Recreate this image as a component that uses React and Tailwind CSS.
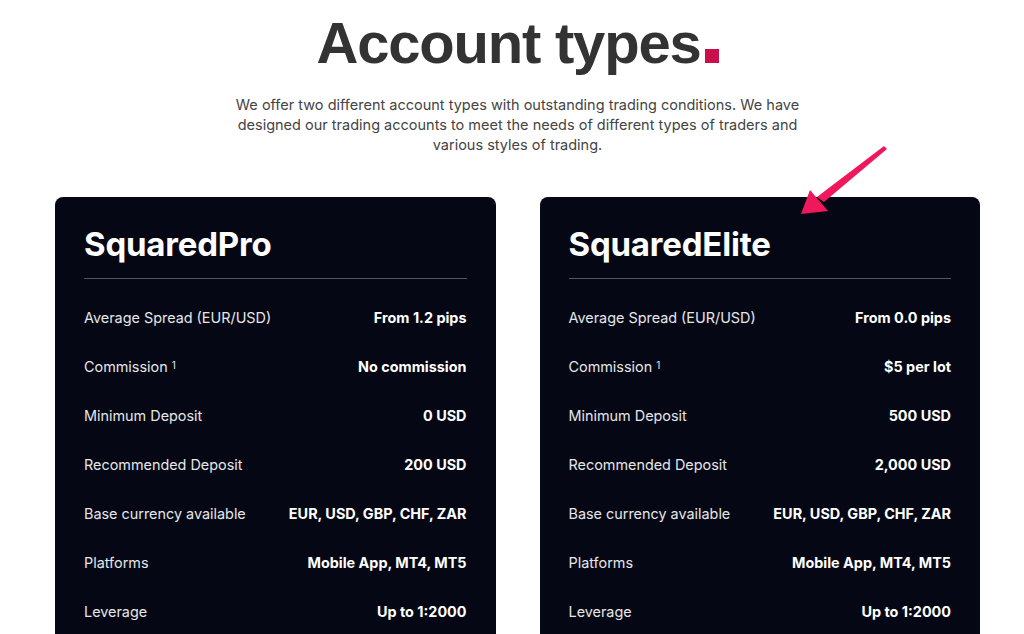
import React from "react";

const accounts = [
    {
        name: "SquaredPro",
        rows: [
            ["Average Spread (EUR/USD)", "From 1.2 pips"],
            ["Commission", "No commission", true],
            ["Minimum Deposit", "0 USD"],
            ["Recommended Deposit", "200 USD"],
            ["Base currency available", "EUR, USD, GBP, CHF, ZAR"],
            ["Platforms", "Mobile App, MT4, MT5"],
            ["Leverage", "Up to 1:2000"],
        ],
    },
    {
        name: "SquaredElite",
        rows: [
            ["Average Spread (EUR/USD)", "From 0.0 pips"],
            ["Commission", "$5 per lot", true],
            ["Minimum Deposit", "500 USD"],
            ["Recommended Deposit", "2,000 USD"],
            ["Base currency available", "EUR, USD, GBP, CHF, ZAR"],
            ["Platforms", "Mobile App, MT4, MT5"],
            ["Leverage", "Up to 1:2000"],
        ],
    },
];

const AccountCard = ({ account }) => {
    return (
        <div className="bg-[#050814] rounded-lg px-[29px] pt-[26px] pb-8 h-[480px]">
            <h2 className="text-[33px] font-bold text-white leading-[42px] tracking-[-0.2px]">{account.name}</h2>
            <div className="h-px bg-[#54565f] mt-[13px] mb-[14px]"></div>
            {account.rows.map(([label, value, sup]) => (
                <div key={label} className="flex items-center justify-between h-[49px] text-[14.4px]">
                    <span className="text-[#e6e6e8]">
                        {label}
                        {sup && <sup className="text-[10px] ml-[4px] relative top-[-3px]">1</sup>}
                    </span>
                    <span className="font-bold text-white">{value}</span>
                </div>
            ))}
        </div>
    );
};

const App = () => {
    return (
        <div className="relative w-[1024px] h-[634px] overflow-hidden bg-white" style={{ fontFamily: "Inter, 'Noto Sans', sans-serif" }}>
            <div className="ml-[55px] w-[925px]">
                <h1
                    className="text-center text-[58px] font-bold text-[#333333] leading-none tracking-[-1.2px] pt-[14px]"
                    style={{ fontFamily: "'Liberation Sans', Arial, sans-serif" }}
                >
                    Account types<span className="inline-block w-[14px] h-[14px] bg-[#c9104a] ml-[4px]"></span>
                </h1>
                <p className="mx-auto mt-[23px] max-w-[580px] text-center text-[14.5px] leading-[20px] text-[#444444]">
                    We offer two different account types with outstanding trading conditions. We have designed our trading accounts to meet the needs of different types of traders and various styles of trading.
                </p>
                <div className="grid grid-cols-2 gap-[44px] mt-[42px]">
                    {accounts.map(account => (
                        <AccountCard key={account.name} account={account} />
                    ))}
                </div>
            </div>
            <svg className="absolute left-[790px] top-[140px]" width="110" height="85" viewBox="0 0 110 85">
                <polygon points="94,6 97,9 34,62 27,57" fill="#f0185c" />
                <polygon points="11,74 20,50 38,71" fill="#f0185c" />
            </svg>
        </div>
    );
};

export default App;
